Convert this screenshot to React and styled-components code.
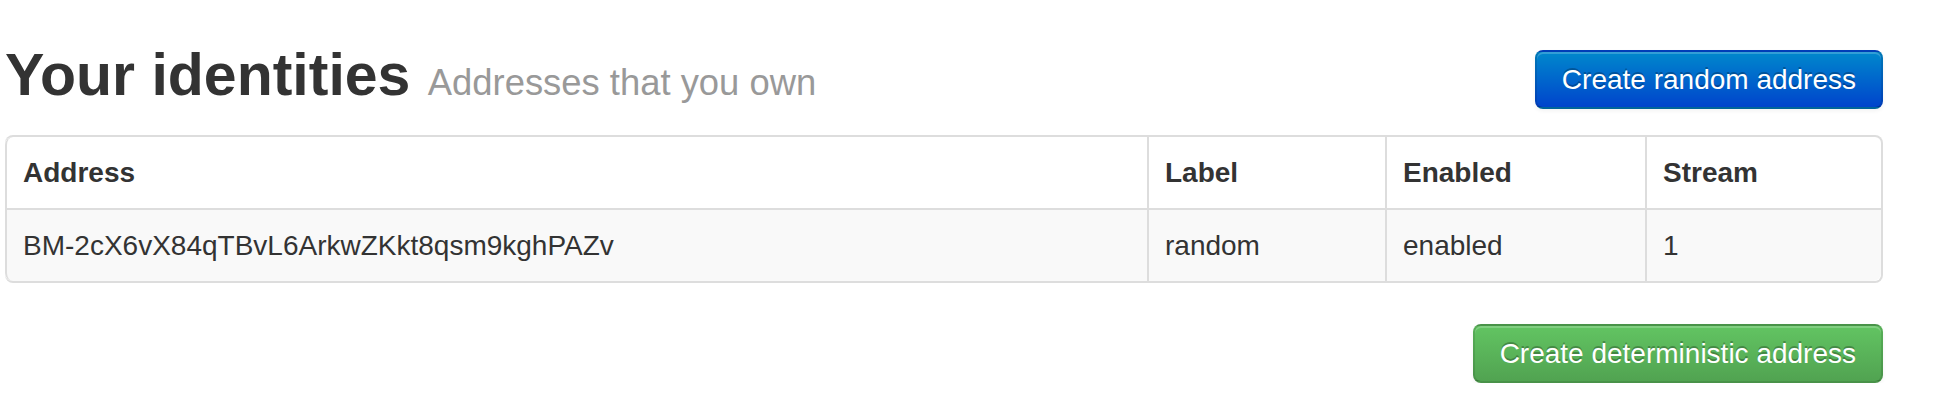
import styled, { createGlobalStyle } from "styled-components";

const GlobalStyle = createGlobalStyle`
  body {
    margin: 0;
    background: #ffffff;
    font-family: "Liberation Sans", Arial, Helvetica, sans-serif;
    color: #333333;
  }
`;

const Page = styled.div`
  padding: 35px 65px 0 5px;
`;

const Header = styled.div`
  display: flex;
  justify-content: space-between;
  align-items: flex-start;
`;

const Title = styled.h2`
  margin: 0;
  font-size: 59px;
  line-height: 80px;
  height: 80px;
  font-weight: bold;
  color: #333333;
`;

const Subtitle = styled.small`
  font-size: 36.4px;
  line-height: 1;
  font-weight: normal;
  color: #999999;
  margin-left: 1px;
`;

const ActionButton = styled.button`
  margin-top: ${(p) => p.$top || 0}px;
  height: 59px;
  padding: 0 25px;
  border: 2px solid;
  border-color: rgba(0, 0, 0, 0.1) rgba(0, 0, 0, 0.1) rgba(0, 0, 0, 0.25);
  border-radius: 8px;
  font-family: "Liberation Sans", Arial, Helvetica, sans-serif;
  font-size: 28px;
  line-height: 40px;
  color: #ffffff;
  text-shadow: 0 -2px 0 rgba(0, 0, 0, 0.25);
  box-shadow: inset 0 2px 0 rgba(255, 255, 255, 0.2),
    0 2px 4px rgba(0, 0, 0, 0.05);
  cursor: pointer;
  background-color: ${(p) => (p.$variant === "success" ? "#5bb75b" : "#006dcc")};
  background-image: ${(p) =>
    p.$variant === "success"
      ? "linear-gradient(to bottom, #62c462, #51a351)"
      : "linear-gradient(to bottom, #0088cc, #0044cc)"};
`;

const Table = styled.table`
  width: 100%;
  margin-top: 20px;
  border-collapse: separate;
  border-spacing: 0;
  border: 2px solid #dddddd;
  border-left: 0;
  border-radius: 8px;
  font-size: 28px;
  line-height: 39px;
  color: #333333;

  thead tr:first-child > *:first-child {
    border-top-left-radius: 8px;
  }
  tbody tr:last-child > *:first-child {
    border-bottom-left-radius: 8px;
  }
  tbody tr:last-child > *:last-child {
    border-bottom-right-radius: 8px;
  }
`;

const HeadCell = styled.th`
  text-align: left;
  font-weight: bold;
  padding: 16px;
  border-left: 2px solid #dddddd;
  width: ${(p) => p.$w || "auto"};
  vertical-align: bottom;
`;

const Cell = styled.td`
  padding: 16px;
  border-left: 2px solid #dddddd;
  border-top: 2px solid #dddddd;
  background: ${(p) => (p.$striped ? "#f9f9f9" : "transparent")};
  vertical-align: top;
`;

const Footer = styled.div`
  display: flex;
  justify-content: flex-end;
  margin-top: 41px;
`;

const columns = [
  { key: "address", title: "Address", width: "1108px" },
  { key: "label", title: "Label", width: "204px" },
  { key: "enabled", title: "Enabled", width: "226px" },
  { key: "stream", title: "Stream" },
];

const rows = [
  {
    address: "BM-2cX6vX84qTBvL6ArkwZKkt8qsm9kghPAZv",
    label: "random",
    enabled: "enabled",
    stream: "1",
  },
];

export default function App() {
  return (
    <>
      <GlobalStyle />
      <Page>
        <Header>
          <Title>
            Your identities <Subtitle>Addresses that you own</Subtitle>
          </Title>
          <ActionButton $top={15}>Create random address</ActionButton>
        </Header>

        <Table>
          <thead>
            <tr>
              {columns.map((c) => (
                <HeadCell key={c.key} $w={c.width}>
                  {c.title}
                </HeadCell>
              ))}
            </tr>
          </thead>
          <tbody>
            {rows.map((r, i) => (
              <tr key={r.address}>
                {columns.map((c) => (
                  <Cell key={c.key} $striped={i % 2 === 0}>
                    {r[c.key]}
                  </Cell>
                ))}
              </tr>
            ))}
          </tbody>
        </Table>

        <Footer>
          <ActionButton $variant="success">Create deterministic address</ActionButton>
        </Footer>
      </Page>
    </>
  );
}
